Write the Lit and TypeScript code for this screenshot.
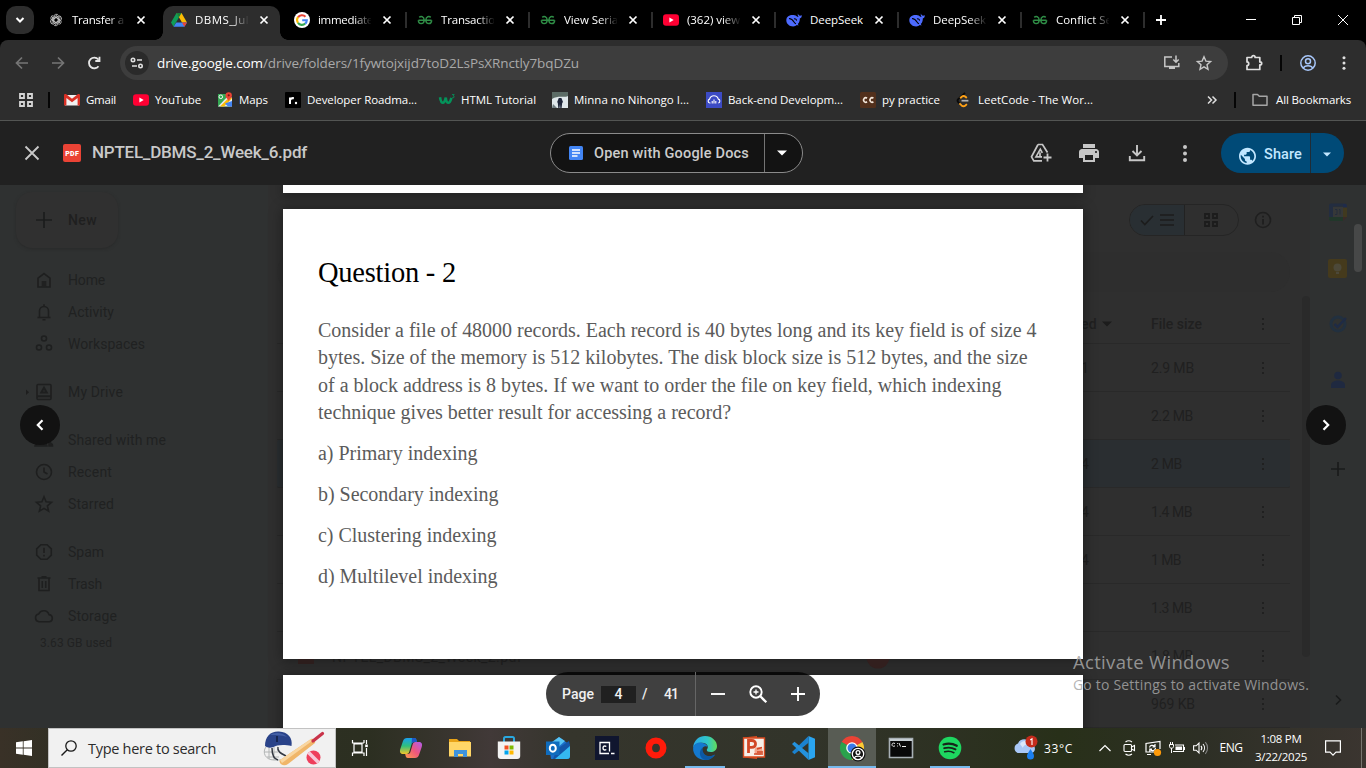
import { LitElement, html, css, svg, nothing } from 'lit';
import { customElement, property } from 'lit/decorators.js';

/** One line of text spread to a given width by letter-spacing. */
@customElement('fit-text')
class FitText extends LitElement {
  @property({ type: Number }) w = 0;
  @property() text = '';
  static styles = css`
    :host { display: inline-block; white-space: pre; flex: none; line-height: 1; }
    span { display: inline-block; white-space: pre; }
  `;
  render() { return html`<span>${this.text}</span>`; }
  updated() {
    const s = this.renderRoot.querySelector('span') as HTMLElement;
    s.style.letterSpacing = '0px';
    const natural = s.getBoundingClientRect().width;
    s.style.letterSpacing = (this.w - natural) / this.text.length + 'px';
  }
}

const t = (text: string, w: number, cls = '') => html`<fit-text class=${cls} .text=${text} .w=${w}></fit-text>`;
const ic = (w: number, h: number, body: unknown, vb = `0 0 ${w} ${h}`) =>
  html`<svg width=${w} height=${h} viewBox=${vb} fill="none" stroke-width="1.6">${body}</svg>`;

/* ---------- favicons ---------- */
const driveLogo = svg`<path d="M5.5 1h5L16 10.5h-5z" fill="#fbbc04"/><path d="M5.5 1 0 10.6l2.5 4.2L8 5.3z" fill="#0f9d58"/><path d="M5.3 10.5H16l-2.6 4.3H2.6z" fill="#4285f4"/><path d="M5.5 1h5L8 5.3z" fill="#188038"/><path d="M16 10.5h-5l2.4 4.3z" fill="#ea4335"/>`;
const fav: Record<string, unknown> = {
  gpt: svg`<g stroke="#c0c0c0" stroke-width=".9" >${[0, 60, 120, 180, 240, 300].map(a => svg`<path transform="rotate(${a} 8 8)" d="M5.800 9.300V4.700a2.500 2.500 0 0 1 4.600-1.300M5.800 6.700 9.300 4.700l3 1.700"/>`)}</g>`,
  drive: driveLogo,
  google: svg`<circle cx="8" cy="8" r="8" fill="#fff"/><g stroke-width="2.1"><path d="M4 5.4A4.8 4.8 0 0 1 11.5 4.7" stroke="#ea4335"/><path d="M4 5.2a4.8 4.8 0 0 0 0 5.6" stroke="#fbbc04"/><path d="M4 10.8a4.8 4.8 0 0 0 7.2.8" stroke="#34a853"/><path d="M11.2 11.6A4.7 4.7 0 0 0 12.8 8.2H8.2" stroke="#4285f4"/></g>`,
  gfg: svg`<g stroke="#2f8d46" stroke-width="1.500"><path d="M1.500 8.200h13M2.300 5.400c1.400-1.400 4.800-1.100 4.800 2.600 0 2.300-1.300 3.600-3 3.600S1.400 10.400 1.400 8.200M13.700 5.400c-1.400-1.400-4.800-1.100-4.800 2.600 0 2.300 1.300 3.600 3 3.600s2.700-1.200 2.700-3.400"/></g>`,
  yt: svg`<rect y="2.300" width="16" height="11.400" rx="3" fill="#ff0033"/><path d="m6.400 5.600 4.300 2.400-4.300 2.400z" fill="#fff"/>`,
  ds: svg`<path d="M15.800 3.300c-.8.300-1.300.5-2 .4-1-.2-1.500-1-1.900-2.100-.3 1.200-.2 2.300.7 3.400-1.600-.1-2.300-1.700-4-1.800C4.500 2.500.4 4 .3 8.200c0 3.400 3 6.200 6.800 6.200 1.800 0 2.700-.7 3.700-1.300l1.800.5-.8-1.500c1.800-1.800 2-3.600 2-5.600 1.300-.4 2-1.400 2-3.200z" fill="#4d6bfe"/><path d="M3 6.500c2.500.2 4 1.800 5.200 3.700.4.700 1 1.200 1.700 1.500M8 7c1.300-.6 2.600.3 2.500 1.600" stroke="#000" stroke-width="1.100"/>`,
  gmail: svg`<path d="M1 3h14v10.500H1z" fill="#f1f1f1"/><path d="M0 3.500C0 2 1.600 1.700 2.600 2.500L8 6.800l5.400-4.300c1-.8 2.600-.5 2.600 1V13.500h-2.400V6L8 10.300 2.400 6v7.500H0z" fill="#d93025"/>`,
  maps: svg`<path d="M1 2h12v12.500H1z" fill="#34a853"/><path d="M1 14.500 12 3l3 3v8.500z" fill="#e8eaed"/><path d="m3 14.500 10-10 2 2-8 8z" fill="#fbbc04"/><path d="M8 11.500 11 14.500h4V9z" fill="#4285f4"/><circle cx="3.800" cy="4.800" r="1.800" stroke="#fff" stroke-width=".9"/><path d="M11.700 9.500C11.500 7 8.500 6 8.500 3.400a3.200 3.200 0 0 1 6.400 0C14.900 6 12 7 11.700 9.500z" fill="#ea4335"/><circle cx="11.700" cy="3.300" r="1.100" fill="#7b1712"/>`,
  road: svg`<rect width="16" height="16" rx="1" fill="#000"/><path d="M5 12V5.500M5 8.200C5.600 6.400 7 5.900 8.900 6.200" stroke="#fff" stroke-width="2"/><circle cx="11" cy="11" r="1.200" fill="#fff"/>`,
  w3: svg`<path d="M1 5.200c.5 3 1.600 5.600 3 5.600S6.200 8 6.800 5.700C7 8 8 10.800 9.400 10.800s2.400-2.800 3-5" stroke="#04925a" stroke-width="2.600"/><path d="M13 2.600h2.200l-1 1.200c1.400.2 1.300 2-.2 2-.5 0-.8-.2-1-.5" stroke="#04925a" stroke-width=".9"/>`,
  minna: svg`<path d="M0 0h16v16H0z" fill="#dfe7ea"/><path d="M0 0h16v4c-4 2-10-1-16 3z" fill="#5c6c66"/><path d="M6.800 6h2.600l1.600 4-.8 1-.6 5H8.300L8 12l-.5 4H6.300l-.5-5-.6-1z" fill="#1d2438"/><path d="M1 12l4 4H0z" fill="#6f7d80"/>`,
  back: svg`<path d="M0 0h16v16H0z" fill="#3c4bc4"/><path d="M4.500 11H3.800a2 2 0 0 1-.2-3.900 4.500 4.500 0 0 1 8.700 0 2 2 0 0 1 0 3.900M6.200 11.500V9M8 11.500V7.500M9.800 11.500V9" stroke="#fff" stroke-width="1.100"/>`,
  cc: svg`<rect width="16" height="16" rx="1.500" fill="#52301c"/><path d="M7 6.200a2.200 2.200 0 1 0 0 3.600M13.400 6.200a2.200 2.200 0 1 0 0 3.600" stroke="#f5e9dd" stroke-width="1.700"/>`,
  leet: svg`<path d="M9 .8 2.200 7.200c-.9 1-.9 2 0 3l1.200 1.200" stroke="#0a0a0a" stroke-width="1.800"/><path d="m4.200 6.200 1.500-1.400c1.200-1 2.600-1 3.800 0l1.300 1.200M3.400 11.400l2.200 2c1.200 1 2.600 1 3.800 0l1.500-1.300" stroke="#ffa116" stroke-width="1.900"/><path d="M5.500 8.700h6.900" stroke="#b3b3b3" stroke-width="1.700"/>`,
};

/* ---------- sidebar glyphs, 20px grid ---------- */
const nav: Record<string, unknown> = {
  Home: svg`<path d="M4 8.200 10 3.500l6 4.700V17H4z"/><path d="M7.700 11h4.600v6H7.700z" fill="currentColor" stroke="none"/>`,
  Activity: svg`<path d="M3.500 15.500h13M5.500 15V9a4.500 4.500 0 0 1 9 0v6M10 2.200v2M8.500 17.800h3"/>`,
  Workspaces: svg`<circle cx="10" cy="4.500" r="2.500"/><circle cx="5" cy="13.500" r="2.500"/><circle cx="15" cy="13.500" r="2.500"/>`,
  'My Drive': svg`<rect x="3" y="2.500" width="14" height="15" rx="1"/><path d="M3 14.300h14M10 5.800 7.300 10.500h5.400z" stroke-width="2"/>`,
  'Shared with me': svg`<path d="M1 16c0-4 12-4 12 0zM15 16h3.500c0-2-1-3-3.500-3.400zM7 5a2.700 2.700 0 1 0 .1 0" fill="currentColor"/>`,
  Recent: svg`<circle cx="10" cy="10" r="7.500"/><path d="M10 5.500V10l3.500 2"/>`,
  Starred: svg`<path d="m10 2.800 2.100 5 5.400.5-4.100 3.600 1.200 5.300L10 14.400l-4.600 2.800 1.200-5.300-4.100-3.600 5.400-.5z"/>`,
  Spam: svg`<path d="M6.900 2.700h6.200l4.200 4.200v6.200l-4.200 4.200H6.900l-4.200-4.200V6.900zM10 5.800v5.200M10 12.700v1.800"/>`,
  Trash: svg`<path d="M3.500 4h13M5 4h10v12.500H5zM8.300 7v7M11.700 7v7M7.500 2.700h5"/>`,
  Storage: svg`<path d="M5 15.700a3.900 3.900 0 0 1-.3-7.700A5.500 5.500 0 0 1 15 8.600a3.600 3.600 0 0 1 .5 7.100z"/>`,
};

const dots = (c = 'currentColor') => svg`<g fill=${c}><circle cx="3" cy="3" r="1.600"/><circle cx="3" cy="8.500" r="1.600"/><circle cx="3" cy="14" r="1.600"/></g>`;
const smallDots = ic(6, 14, svg`<path d="M2 1h2v2H2zM2 6h2v2H2zM2 11h2v2H2z" fill="currentColor"/>`);

const tabs: [string, string, number][] = [
  ['gpt', 'Transfer a', 52], ['drive', 'DBMS_Jul', 54], ['google', 'immediate', 55], ['gfg', 'Transactio', 54],
  ['gfg', 'View Seria', 54], ['yt', '(362) view', 53], ['ds', 'DeepSeek', 53], ['ds', 'DeepSeek', 53], ['gfg', 'Conflict Se', 56],
];
const marks: [string, string, number, number][] = [
  ['gmail', 'Gmail', 30, 69], ['yt', 'YouTube', 46, 84], ['maps', 'Maps', 29, 68], ['road', 'Developer Roadma...', 110, 154],
  ['w3', 'HTML Tutorial', 75, 113], ['minna', 'Minna no Nihongo I...', 115, 154], ['back', 'Back-end Developm...', 115, 154],
  ['cc', 'py practice', 58, 96], ['leet', 'LeetCode - The Wor...', 115, 154],
];
const sideItems: [string, number, string][] = [
  ['Home', 37, ''], ['Activity', 46, ''], ['Workspaces', 77, ''], ['My Drive', 55, 'gap'], ['Shared with me', 98, 'gap'],
  ['Recent', 44, ''], ['Starred', 46, ''], ['Spam', 36, 'gap'], ['Trash', 34, ''], ['Storage', 49, ''],
];
const rows: [string, number, string][] = [
  ['2.9 MB', 43, '1'], ['2.2 MB', 42, ''], ['2 MB', 31, '4'], ['1.4 MB', 41, '4'], ['1 MB', 30, '4'], ['1.3 MB', 41, ''], ['1.8 MB', 42, ''], ['969 KB', 44, ''],
];

/* ---------- taskbar glyphs ---------- */
const apps: [unknown, string][] = [
  [ic(24, 24, svg`<defs><linearGradient id="c1" x1="0" y1="0" x2="0" y2="1"><stop offset="0" stop-color="#1aa0f0"/><stop offset=".5" stop-color="#2fc07c"/><stop offset="1" stop-color="#f4c52a"/></linearGradient><linearGradient id="c2" x1="1" y1="0" x2="0" y2="1"><stop offset="0" stop-color="#b05cf0"/><stop offset=".5" stop-color="#f0567c"/><stop offset="1" stop-color="#ff9a4c"/></linearGradient></defs><path d="M8 2h7c2 0 2.300 1.500 2.800 4h-2.500c-2 0-2.500 1-3 3L10.500 15c-.5 2-1.200 3-3 3H4C1 18 .5 15.500 1.300 13L4 5c.7-2 2-3 4-3z" fill="url(#c1)"/><path d="M16 22H9c-2 0-2.300-1.500-2.800-4h2.500c2 0 2.500-1 3-3L13.500 9c.5-2 1.200-3 3-3H20c3 0 3.500 2.500 2.700 5L20 19c-.7 2-2 3-4 3z" fill="url(#c2)"/><path d="M13 2h3c1.500.2 1.500 2 2 4h-2.500c-2 0-2.500 1-3 2.500z" fill="#1d58c8"/>`), ''],
  [ic(24, 24, svg`<path d="M1 3h8l2 2h11v15H1z" fill="#e8a317"/><path d="M1 6h22v14.500H1z" fill="#ffd667"/><path d="M6 21v-7h13v7h-4v-3h-5v3z" fill="#3f93dc"/>`), ''],
  [ic(24, 24, svg`<path d="M7 6V2.500C7 1.500 7.500 1 8.500 1h7c1 0 1.500.5 1.500 1.500V6" stroke="#2aa7df" stroke-width="2"/><path d="M.8 5.500h22.400V20a3 3 0 0 1-3 3H3.800a3 3 0 0 1-3-3z" fill="#f3f3f3"/><path d="M7.500 9.500h4v4h-4z" fill="#f25022"/><path d="M12.500 9.500h4v4h-4z" fill="#7fba00"/><path d="M7.500 14.500h4v4h-4z" fill="#00a4ef"/><path d="M12.500 14.500h4v4h-4z" fill="#ffb900"/>`), ''],
  [ic(26, 24, svg`<path d="M4 9 14 1l11 8v11a3 3 0 0 1-3 3H6z" fill="#1b6fc9"/><path d="M7 6 14 1l6 4-9 8z" fill="#56c4f5"/><path d="m12 13 12-8 1 4v11a3 3 0 0 1-3 3H8z" fill="#1356a8"/><path d="m25 10-15 13h12a3 3 0 0 0 3-3z" fill="#35b8f1"/><path d="M1 5.500h13.500V19H1z" fill="#0f6cbd"/><ellipse cx="7.800" cy="12.200" rx="3" ry="3.500" stroke="#fff" stroke-width="2"/>`), ''],
  [ic(24, 24, svg`<path d="M0 0h24v24H0z" fill="#10162f"/><path d="M14 17.500H5v-11h9.500v9" stroke="#fff" stroke-width="1.300"/><path d="M11.300 10.500C9.500 9.300 8 10.300 8 12s1.500 2.700 3.300 1.500M16 17.500h3.500" stroke="#fff" stroke-width="1.400"/>`), ''],
  [ic(22, 22, svg`<circle cx="11" cy="11" r="7" stroke="#ff1b0a" stroke-width="7"/><ellipse cx="11" cy="11" rx="3.800" ry="4.300" fill="#34352c"/>`), ''],
  [ic(24, 24, svg`<defs><linearGradient id="e1" x1="0" y1="0" x2="1" y2="0"><stop offset="0" stop-color="#2aa9e8"/><stop offset=".6" stop-color="#30c7c7"/><stop offset="1" stop-color="#62dd5a"/></linearGradient></defs><path d="M.3 10C1.500 4 6 0 12 0c7 0 12 5 12 10 0 4-3 6-6.200 6-3 0-4-1-4-2s1.200-1.500 1-3.500C14.500 8 11.500 6.500 8 6.800 4 7 1 9 .3 12z" fill="url(#e1)"/><path d="M.1 12C1 8 5 6.200 8.500 6.700c3 .3 5.700 2 6 4C13 9.500 9 10 9 14c0 4 4 7 8.500 6.300 2-.3 3.500-1.300 4.500-1.800C20 22 16 24 12 24 5 24-.3 18.500.1 12z" fill="#1479cf"/><path d="M9.500 11.500C4 17 8 24 13 24c4 0 7-2 9-5.500-6 3.500-13 1.500-12.500-7z" fill="#0c59a4"/>`), 'open'],
  [ic(24, 24, svg`<path d="M1 1.500 15 0v23L1 21.500z" fill="#d6491f"/><path d="M1.500 2h21v19h-21z" fill="#f7efe9" stroke="#d6491f" stroke-width="1.400"/><path d="M6.500 17V4.500h3.200c5.200 0 5 6.800 0 6.800H6.800" stroke="#d24726" stroke-width="2.800"/><circle cx="16.500" cy="15" r="4" fill="#f2a38a"/><path d="M12 18h9M15 13l5-1.500M15 16h6" stroke="#d24726"/>`), ''],
  [ic(24, 24, svg`<path d="M17.500 0 24 2.800v18.400L17.500 24z" fill="#2aa5f0"/><path d="M17.500 0v6.800L3.500 18.200 1 16z" fill="#1b82cf"/><path d="m1 8 2.500-2.200 14 11.400V24z" fill="#2492de"/>`), ''],
  [ic(24, 24, svg`<path d="M12 12 1.600 6a12 12 0 0 1 20.800 0z" fill="#ea4335"/><path d="M12 12 1.600 6A12 12 0 0 0 12 24z" fill="#2aa24c"/><path d="M12 12 22.400 6A12 12 0 0 1 12 24z" fill="#fcc934"/><circle cx="12" cy="12" r="5.800" fill="#fff"/><circle cx="12" cy="12" r="4.500" fill="#3b78e7"/><circle cx="18" cy="18" r="7.500" fill="#111"/><circle cx="18" cy="18" r="5.700" stroke="#fff" stroke-width="1.300"/><circle cx="18" cy="16.500" r="1.900" stroke="#fff" stroke-width="1.300"/><path d="M14.200 21.800c1.500-2.300 6.100-2.300 7.600 0" stroke="#fff" stroke-width="1.300"/>`), 'open active'],
  [ic(24, 20, svg`<path d="M.5.5h23v19H.5z" fill="#080808" stroke="#a8b0b5"/><path d="M1 1h22v2H1z" fill="#c5cdd2"/><path d="M6 5.500c-2-1-3 0-3 1.200s1 2.200 3 1.200M8 5.500h.8M8 8h.8M10 5l1.500 3.500M13 8.500h4" stroke="#eee" stroke-width="1"/>`), ''],
  [ic(24, 24, svg`<circle cx="12" cy="12" r="11.300" fill="#1ed760"/><g stroke="#16241a" stroke-linecap="round"><path d="M5.500 8.500c4.500-1.300 9.500-.8 13.300 1.300" stroke-width="2.200"/><path d="M6.200 12.200c4-1.100 8-.6 11.300 1.200" stroke-width="1.900"/><path d="M6.700 15.700c3.300-.9 6.500-.5 9.200 1" stroke-width="1.600"/></g>`), 'open'],
];

@customElement('app-root')
class AppRoot extends LitElement {
  static styles = css`
    :host { display: flex; flex-direction: column; width: 1366px; height: 768px; overflow: hidden; background: #000;
      font-family: "Open Sans", "Noto Sans", sans-serif; font-size: 12px; color: #fff; }
    * { box-sizing: border-box; }
    svg { display: block; flex: none; overflow: visible; }
    .row, .tabs, .tab, .toolbar, .omni, .marks, .mark, .taskbar, .head { display: flex; align-items: center; }
    .grow { flex: 1; }
    .cell { display: grid; place-items: center; flex: none; }

    .tabs { height: 40px; padding-left: 6px; }
    .find { width: 28px; height: 28px; border-radius: 10px; background: #2d2d2d; margin-right: 6px; }
    .tab { width: 123px; height: 40px; padding-left: 8px; position: relative; flex: none; }
    .title { width: 53px; margin-left: 8px; overflow: hidden; height: 18px; line-height: 18px; font-size: 11.5px; mask-image: linear-gradient(90deg, #000 68%, transparent 102%); }
    .title.full { mask-image: none; }
    .title fit-text { margin-top: 3px; vertical-align: top; }
    .close { width: 32px; }
    .sep { width: 2px; height: 16px; background: #2d2d2d; margin-left: 2px; }
    .tab.on::before { content: ""; position: absolute; z-index: 0; inset: 6px 6px 0 0; background: #2d2d2d; border-radius: 10px 10px 0 0; }
    .tab.on::after { content: ""; position: absolute; left: -8px; right: -2px; bottom: 0; height: 8px;
      background: radial-gradient(circle at 0 0, transparent 7.500px, #2d2d2d 8px) 0 0 / 8px 8px no-repeat,
        radial-gradient(circle at 100% 0, transparent 7.500px, #2d2d2d 8px) 100% 0 / 8px 8px no-repeat; }
    .tab > * { z-index: 1; }
    .win { width: 46px; height: 40px; }
    .plus { width: 28px; }

    .toolbar { height: 46px; background: #2d2d2d; border-radius: 8px 8px 0 0; padding-left: 4px; flex: none; }
    .tb { width: 36px; }
    .omni { width: 1108px; height: 34px; background: #3d3d3d; border-radius: 17px; margin-left: 8px; padding-left: 5px; }
    .site { width: 24px; height: 24px; border-radius: 50%; background: #2a2a2a; margin-right: 8px; }
    .url { font-size: 13.500px; margin-top: 2px; }
    .dim { color: #a9a9a9; }
    .vs { width: 2px; height: 16px; background: #050505; flex: none; }
    .marks { height: 35px; background: #2d2d2d; padding: 0 0 8px 19px; flex: none; }
    .mark { gap: 6px; flex: none; }
    .mark fit-text { font-size: 11.500px; }
    .marks .vs:first-of-type { margin: 0 14px 0 15px; }
    .hair { height: 1px; margin-top: -1px; background: #535553; flex: none; }

    .viewer { height: 607px; display: flex; flex-direction: column; font-family: Roboto, sans-serif; flex: none; position: relative; }
    .head { height: 64px; background: #212121; color: #ccc; flex: none; padding: 0 22px 0 24px; z-index: 2; }
    .fname { font-size: 17px; font-weight: 500; margin: -2px 0 0 11px; color: #c9c9c9; }
    .open { width: 253px; height: 40px; border: 1px solid #8b8b8b; border-radius: 20px; background: #131313; display: flex; align-items: center; padding-left: 18px; margin-left: 243px; }
    .open fit-text { font-size: 14.500px; font-weight: 500; margin: 2px 15px 0 11px; }
    .odiv { width: 1px; height: 38px; background: #747474; }
    .share { width: 123px; height: 40px; border-radius: 20px; background: #004a77; color: #c2e7ff; display: flex; align-items: center; padding-left: 18px; }
    .share svg { margin-top: 5px; }
    .share .cell svg { margin-top: 2px; }
    .share fit-text { font-size: 14.500px; font-weight: 500; margin: 5px 0 0 8px; }
    .sdiv { width: 1px; height: 40px; background: #202c36; margin-left: 8px; }

    .body { flex: 1; display: grid; grid-template-columns: 268px 1fr 56px; background: #2f3131; color: #1f1f1f; position: relative; overflow: hidden; min-height: 0; }
    .side { padding-top: 7px; stroke: #1e1f1f; }
    .new { width: 102px; height: 56px; margin-left: 16px; border-radius: 16px; background: #303030; box-shadow: 0 1px 3px #292a2a; display: flex; align-items: center; padding-left: 19px; gap: 15px; font-size: 14px; font-weight: 500; margin-bottom: 16px; }
    .item { height: 32px; padding-left: 34px; display: flex; align-items: center; gap: 14px; font-size: 14px; color: #202121; position: relative; }
    .item.gap { margin-top: 16px; }
    .used { margin: 5px 0 0 40px; font-size: 12px; height: 12px; display: block; color: #212222; }
    .caret { position: absolute; left: 26px; top: 12px; }

    .main { background: #2f2f2f; padding: 19px 19px 0 9px; position: relative; color: #202020; overflow: hidden; }
    .ctl { justify-content: flex-end; height: 32px; padding-right: 18px; }
    .toggle { width: 110px; height: 32px; border: 1px solid #252525; border-radius: 16px; display: flex; overflow: hidden; margin-right: 14px; }
    .toggle > div { flex: 1; display: flex; align-items: center; justify-content: center; gap: 6px; }
    .toggle .sel { background: #292f33; border-right: 1px solid #222; }
    .filter { height: 40px; margin: 16px 1px 12px 0; border-radius: 20px; background: #2e2e2e; }
    .line { height: 48px; border-bottom: 1px solid #292929; display: grid; grid-template-columns: 804px 70px 99px 26px; align-items: center; font-size: 14px; margin-right: 1px; }
    .main .hd { height: 40px; font-weight: 500; }
    .main .pick { background: #2a2e31; border-radius: 2px; }
    .main .line > .lead { display: flex; align-items: center; }
    .gutter { position: absolute; right: 0px; top: 111px; width: 8px; height: 361px; border-radius: 4px; background: #2a2a2a; }
    .rail { display: flex; flex-direction: column; align-items: center; padding: 15px 1px 0 0; position: relative; }
    .rail .cell { width: 24px; height: 24px; margin-bottom: 32px; }
    .thumb { position: absolute; left: 44px; top: 39px; width: 8px; height: 48px; border-radius: 4px; background: #474848; }

    .pages { position: absolute; inset: 0 283px 0 283px; display: flex; flex-direction: column; gap: 16px; background: #2f2f2f; }
    .page { background: #fff; box-shadow: 0 1px 12px 1px rgba(0,0,0,.36); flex: none; font-family: "Liberation Serif", serif; color: #5b5b5b; }
    .p0 { height: 8px; } .p2 { height: 60px; }
    .p1 { height: 450px; padding: 50px 0 0 35px; display: flex; flex-direction: column; font-size: 20px; }
    .p1 .q { font-size: 28.500px; color: #000; margin-bottom: 32px; height: 29px; }
    .p1 .l { height: 27.330px; } .p1 .l4 { height: 41px; }
    .ghost { position: absolute; inset: 474px 283px 0 283px; height: 10px; overflow: hidden; color: #1b1b1b; display: flex; gap: 18px; padding-left: 15px; font-size: 14px; }
    .ghost .up { margin-top: -10px; }
    .round { position: absolute; top: 220px; width: 40px; height: 40px; border-radius: 50%; background: #121212; z-index: 3; }
    .prev { left: 20px; } .next { right: 20px; }
    .pill { position: absolute; left: 546px; top: 487px; width: 274px; height: 44px; border-radius: 22px; background: rgba(0,0,0,.75); color: #f0f0f0; display: flex; align-items: center; padding-left: 16px; font-size: 14px; font-weight: 500; }
    .num { width: 35px; height: 17px; background: #202020; margin: 0 6px 0 7px; }
    .pdiv { width: 1px; height: 44px; background: #666; margin-left: 17px; }
    .mark-win { position: absolute; left: 1073px; top: 468px; font-family: "Open Sans", sans-serif; color: rgba(166,166,166,.85); display: flex; flex-direction: column; gap: 6px; z-index: 4; font-size: 18.500px; }
    .mark-win .s { font-size: 14px; }

    .taskbar { height: 40px; flex: none; background: linear-gradient(90deg, #393127 0, #2f3024 80px, #2c2f21 370px, #37342d 440px, #413938 490px, #35352c 570px, #32342a 800px, #2d3122 950px, #283019 1060px, #2d2f25 1200px, #3b3530 1366px); position: relative; }
    .start { width: 48px; }
    .search { width: 288px; height: 40px; background: #f1f1f1; border: 1px solid #c2c2c2; color: #2c2c2c; display: flex; align-items: center; padding-left: 12px; font-size: 14.500px; }
    .search fit-text { margin: 2px 47px 0 11px; }
    .app { width: 49px; height: 40px; padding-right: 1px; position: relative; }
    .app.active { background: linear-gradient(#585c54, #585c54) 0 0 / 48px 40px no-repeat; }
    .app.open-app::after { content: ""; position: absolute; left: 4px; right: 5px; bottom: 0; height: 2px; background: #76b9ed; }
    .app.active.open-app::after { left: 0; right: 1px; }
    .tv { width: 48px; margin-right: 3px; }
    .tray { width: 24px; }
    .clock { display: flex; flex-direction: column; align-items: center; gap: 7px; font-size: 11.500px; width: 64px; padding-bottom: 1px; }
    .edge { width: 1px; height: 40px; background: #77756f; position: absolute; right: 4px; }
  `;

  private chrome() {
    return html`
      <div class="tabs">
        <div class="find cell">${ic(10, 8, svg`<path d="m1.500 2 3.500 3.500L8.500 2" stroke="#fff" stroke-width="2"/>`)}</div>
        ${tabs.map(([icon, name, w], i) => html`<div class="tab ${i === 1 ? 'on' : ''}">
          ${ic(16, 16, fav[icon])}
          <div class="title ${i === 6 ? 'full' : ''}">${t(name, w)}</div>
          <div class="close cell">${ic(10, 10, svg`<path d="m1.500 1.500 7 7m0-7-7 7" stroke="#fff" stroke-width="1.700"/>`)}</div>
          ${i > 1 ? html`<div class="sep"></div>` : nothing}
        </div>`)}
        <div class="plus cell">${ic(12, 12, svg`<path d="M6 1v10M1 6h10" stroke="#fff" stroke-width="1.800"/>`)}</div>
        <div class="grow"></div>
        <div class="win cell">${ic(10, 10, svg`<path d="M0 4.500h10" stroke="#fff" stroke-width="1"/>`)}</div>
        <div class="win cell">${ic(10, 10, svg`<path d="M.5 2.500h7v7h-7zM2.500 2V.5h7v7H8" stroke="#fff" stroke-width="1"/>`)}</div>
        <div class="win cell">${ic(10, 10, svg`<path d="m0 0 10 10M10 0 0 10" stroke="#fff" stroke-width="1"/>`)}</div>
      </div>
      <div class="toolbar">
        <div class="tb cell">${ic(14, 14, svg`<path d="M13 7H2M7 1.500 1.500 7 7 12.500" stroke="#757575" stroke-width="1.700"/>`)}</div>
        <div class="tb cell">${ic(14, 14, svg`<path d="M1 7h11M7 1.500 12.500 7 7 12.500" stroke="#757575" stroke-width="1.700"/>`)}</div>
        <div class="tb cell">${ic(14, 14, svg`<path d="M11.500 10.200A5.300 5.300 0 1 1 11.300 3.500M12.500.8V5H8.300" stroke="#e6e6e6" stroke-width="1.800"/>`)}</div>
        <div class="omni">
          <div class="site cell">${ic(14, 12, svg`<g stroke="#e0e0e0" stroke-width="1.600"><circle cx="3" cy="3" r="1.700"/><path d="M7 3h5M2 9h5"/><circle cx="10.500" cy="9" r="1.700"/></g>`)}</div>
          ${t('drive.google.com', 106, 'url')}${t('/drive/folders/1fywtojxijd7toD2LsPsXRnctly7bqDZu', 316, 'url dim')}
          <div class="grow"></div>
          ${ic(18, 16, svg`<path d="M9 2H1.800v9.500h14V8M13 .5V7M10.300 4.500 13 7.200l2.700-2.700" stroke="#c7c7c7" stroke-width="1.500"/><path d="M6 11.500h6V14H6z" fill="#c7c7c7"/>`)}
          <div class="cell" style="width:46px;margin-right:1px">${ic(16, 16, svg`<path d="m8 1.800 1.900 4.300 4.700.5L11 9.700l1 4.600-4-2.400-4 2.400 1-4.600-3.600-3.100 4.700-.5z" stroke="#c7c7c7" stroke-width="1.400"/>`)}</div>
        </div>
        <div class="cell" style="width:52px">${ic(18, 18, svg`<path d="M2 3.500h4.700c0-2.600 3.400-2.600 3.400 0h4.700v4.400c2.500 0 2.500 3 0 3V15.500H2v-4c2.300 0 2.300-3.600 0-3.600z" stroke="#e0e0e0" stroke-width="1.700" stroke-linejoin="round"/>`)}</div>
        <div class="vs"></div>
        <div class="cell" style="width:52px">${ic(16, 16, svg`<g stroke="#a8c7fa" stroke-width="1.500"><circle cx="8" cy="8" r="7.200"/><circle cx="8" cy="6.300" r="2.500"/><path d="M3.200 13.200c1.500-3.300 8.100-3.300 9.600 0"/></g>`)}</div>
        <div class="cell" style="width:20px">${ic(6, 16, dots('#e0e0e0'), '0 0 6 17')}</div>
      </div>
      <div class="marks">
        ${ic(14, 14, svg`<path d="M1 1h4v4H1zM9 1h4v4H9zM1 9h4v4H1zM9 9h4v4H9z" stroke="#d5d5d5" stroke-width="1.800"/>`)}
        <div class="vs"></div>
        ${marks.map(([icon, name, w, box]) => html`<div class="mark" style="width:${box}px">${ic(16, 16, fav[icon])}${t(name, w)}</div>`)}
        <div class="grow"></div>
        ${ic(12, 10, svg`<path d="m2 1.500 3.500 3.500L2 8.500M6.500 1.500 10 5 6.500 8.500" stroke="#dedede" stroke-width="1.500"/>`)}
        <div class="vs" style="margin:0 16px"></div>
        <div class="mark" style="width:114px;gap:8px">${ic(16, 14, svg`<path d="M1 12.300V1.500h4.500L7.300 3.300H15v9z" stroke="#a5a5a5" stroke-width="1.500" stroke-linejoin="round"/>`)}${t('All Bookmarks', 75)}</div>
      </div>
      <div class="hair"></div>`;
  }

  private drive() {
    return html`
      <div class="side">
        <div class="new">${ic(18, 18, svg`<path d="M9 1v16M1 9h16" stroke="#1b1c1c"/>`)}${t('New', 29)}</div>
        ${sideItems.map(([name, w, gap]) => html`<div class="item ${gap}">
          ${name === 'My Drive' ? html`<div class="caret">${ic(4, 8, svg`<path d="m0 1.500 3 2.700-3 2.700z" fill="#1e1e1e" stroke="none"/>`)}</div>` : nothing}
          ${ic(20, 20, nav[name])}${t(name, w)}</div>`)}
        ${t('3.63 GB used', 72, 'used')}
      </div>
      <div class="main">
        <div class="row ctl">
          <div class="toggle"><div class="sel">${ic(14, 12, svg`<path d="m1 6.500 3.800 4L13 2" stroke="#1c1c1c"/>`)}${ic(14, 14, svg`<path d="M0 2h14M0 7h14M0 12h14" stroke="#1c1c1c"/>`)}</div>
            <div>${ic(14, 14, svg`<path d="M1 1h4v4H1zM9 1h4v4H9zM1 9h4v4H1zM9 9h4v4H9z" stroke="#1c1c1c" stroke-width="1.800"/>`)}</div></div>
          ${ic(20, 20, svg`<circle cx="10" cy="10" r="7.500" stroke="#1f1f1f"/><path d="M10 9v5.500M10 5.800v1.600" stroke="#1f1f1f" stroke-width="1.800"/>`)}
        </div>
        <div class="filter"></div>
        <div class="line hd"><span></span><span class="lead">${t('ed', 16)}<span class="cell" style="width:20px">${ic(10, 6, svg`<path d="M0 .5h10l-5 5z" fill="#1c1c1c"/>`)}</span></span>${t('File size', 51)}<span class="cell">${smallDots}</span></div>
        ${rows.map(([size, w, y], i) => html`<div class="line ${i === 2 ? 'pick' : ''}"><span></span><span class="lead">${y}</span>${t(size, w)}<span class="cell">${smallDots}</span></div>`)}
        <div class="gutter"></div>
      </div>
      <div class="rail">
        <div class="cell">${ic(18, 18, svg`<path d="M0 2.500A2 2 0 0 1 2 .5h12v3H4v12H0z" fill="#232d40"/><path d="M14 .5h2a2 2 0 0 1 2 2V14h-4z" fill="#40391f"/><path d="M14 .5h2a2 2 0 0 1 2 2v2h-4z" fill="#1f2b4a"/><path d="M0 14h14v4H2a2 2 0 0 1-2-2z" fill="#21372a"/><path d="M14 14h4l-4 4z" fill="#3c2a27"/><path d="M4 4h10v10H4z" fill="#363838"/><path d="M6 6.500h2v5H6M10 6.500h1v5" stroke="#252c3b" stroke-width="1"/>`)}</div>
        <div class="cell">${ic(19, 19, svg`<rect width="19" height="19" rx="2" fill="#453a1c"/><circle cx="9.500" cy="8.500" r="4" fill="#4c4839"/><path d="M8 13h3v2H8z" fill="#4c4839"/>`)}</div>
        <div class="cell">${ic(18, 18, svg`<circle cx="9" cy="9" r="7" stroke="#22303f" stroke-width="3"/><path d="m5.500 9 3 3L17 3" stroke="#1f2b45" stroke-width="2.500"/>`)}</div>
        <div class="cell">${ic(16, 18, svg`<circle cx="8" cy="4.500" r="3.800" fill="#1f2940"/><path d="M1 17v-3c0-6 14-6 14 0v3z" fill="#1f2940"/>`)}</div>
        <div class="cell" style="margin-top:33px">${ic(14, 14, svg`<path d="M7 0v14M0 7h14" stroke="#1a1b1b"/>`)}</div>
        <div class="cell" style="margin-top:175px">${ic(8, 12, svg`<path d="m2 1.500 4.500 4.500L2 10.500" stroke="#1a1b1b"/>`)}</div>
        <div class="thumb"></div>
      </div>`;
  }

  private reader() {
    const lines: [string, number][] = [
      ['Consider a file of 48000 records. Each record is 40 bytes long and its key field is of size 4', 718.5],
      ['bytes. Size of the memory is 512 kilobytes. The disk block size is 512 bytes, and the size', 709.5],
      ['of a block address is 8 bytes. If we want to order the file on key field, which indexing', 683.5],
      ['technique gives better result for accessing a record?', 413]];
    const opts: [string, number][] = [['a) Primary indexing', 159.5], ['b) Secondary indexing', 180.5], ['c) Clustering indexing', 178.5], ['d) Multilevel indexing', 179.5]];
    return html`
      <div class="pages">
        <div class="page p0"></div>
        <div class="page p1">
          ${t('Question - 2', 138, 'q')}
          ${lines.map(([s, w], i) => t(s, w, i === 3 ? 'l4' : 'l'))}
          ${opts.map(([s, w]) => t(s, w, 'l4'))}
        </div>
        <div class="page p2"></div>
      </div>
      <div class="ghost">
        ${ic(16, 16, svg`<path d="M0-10h16V5H0z" fill="#2c1d1c"/>`)}
        <span class="up">${t('NPTEL_DBMS_2_Week_2.pdf', 190)}</span>
        <span style="width:306px"></span>
        ${ic(24, 16, svg`<circle cx="14" cy="-2" r="11.500" fill="#321f1e"/>`)}
      </div>
      <div class="round prev cell">${ic(8, 12, svg`<path d="M6.500 1.200 1.800 6l4.700 4.800" stroke="#fff" stroke-width="2.200"/>`)}</div>
      <div class="round next cell">${ic(8, 12, svg`<path d="M1.500 1.200 6.200 6l-4.700 4.800" stroke="#fff" stroke-width="2.200"/>`)}</div>
      <div class="pill">
        ${t('Page', 32)}<div class="num cell">${t('4', 8)}</div>${t('/', 5)}<span style="width:17px"></span>${t('41', 14)}
        <div class="pdiv"></div>
        <div class="cell" style="width:44px">${ic(14, 14, svg`<path d="M0 7h14" stroke="#fff" stroke-width="1.900"/>`)}</div>
        <div class="cell" style="width:36px">${ic(18, 18, svg`<circle cx="7" cy="7" r="5.700" stroke="#fff" stroke-width="1.900"/><path d="m11.300 11.300 6 6" stroke="#fff" stroke-width="2.300"/><path d="M7 4.500v5M4.500 7h5" stroke="#fff" stroke-width="1.300"/>`)}</div>
        <div class="cell" style="width:44px">${ic(14, 14, svg`<path d="M0 7h14M7 0v14" stroke="#fff" stroke-width="1.900"/>`)}</div>
      </div>
      <div class="mark-win">${t('Activate Windows', 157)}${t('Go to Settings to activate Windows.', 236, 's')}</div>`;
  }

  private taskbar() {
    return html`<div class="taskbar">
      <div class="start cell">${ic(16, 16, svg`<path d="M0 2.300 6.800 1.300v6.300H0zM7.600 1.200 16 0v7.600H7.600zM0 8.400h6.800v6.300L0 13.700zM7.600 8.400H16V16l-8.400-1.200z" fill="#fff"/>`)}</div>
      <div class="search">
        ${ic(16, 16, svg`<circle cx="10" cy="6" r="5.200" stroke="#1a1a1a" stroke-width="1.300"/><path d="M6.300 9.700.5 15.500" stroke="#1a1a1a" stroke-width="1.400"/>`)}
        ${t('Type here to search', 128)}
        ${ic(62, 36, svg`<g stroke="#b2b5b5" stroke-width="1"><path d="M3 17c-4 5-1 13 8 13h7M1 22h14M4 27h12M6 17v12M11 17v13"/></g><path d="M9 18c0 6 2 11 6 12M15 17c-1 4 2 6 8 9" stroke="#333842" stroke-width="1.500"/><path d="M2 16C2 6 8 1 16 1.500 25 2 30 8 28.500 16c-8-2-15-1-18 1-3 1-6 1-8.500-1z" fill="#2a4389"/><path d="M7 5c4-3 13-3 17 2-6-2-13-2-17-2z" fill="#4460a6"/><path d="M14 6v6" stroke="#162550" stroke-width="2"/><path d="M17 30 48 9c2-1 5 1 4 4L25 34c-4 3-10 0-8-4z" fill="#f0b669"/><path d="M17 30 48 9l1 2-30 22z" fill="#f9d6a0"/><path d="m50 11 9.500-7.500" stroke="#c93349" stroke-width="3.200" stroke-linecap="round"/><circle cx="50.500" cy="27.500" r="7" fill="#ee3f5c"/><path d="m45.500 22.500 10 10" stroke="#f7c8d8" stroke-width="3.500"/>`)}
      </div>
      <div class="tv cell">${ic(18, 16, svg`<g stroke="#fff" stroke-width="1.200"><path d="M3 4h8v8H3zM1.500 0v3H13M13 0v3M1.500 16v-3H13v3M15.500 0v4M15.500 8v8"/></g><path d="M14.200 4.500h2.600v2.600h-2.600z" fill="#fff"/>`)}</div>
      ${apps.map(([icon, state]) => html`<div class="app cell ${state.includes('open') ? 'open-app' : ''} ${state.includes('active') ? 'active' : ''}">${icon}</div>`)}
      <div class="cell" style="width:36px;margin-left:33px">${ic(26, 26, svg`<path d="M5 18a5 5 0 0 1 0-9.500C7 3 15 3 16.500 8c5-1 8 8 2.500 10z" fill="#a9c8f7"/><path d="M7 9c2-4 8-4 9 0-3 0-6 2-6 4z" fill="#dbe8fc"/><path d="M17.500 14c-2 3.500-3.500 5-3.500 7a3.500 3.500 0 0 0 7 0c0-2-1.500-3.500-3.500-7z" fill="#1a7ff0"/><circle cx="18.500" cy="6.500" r="6" fill="#c42b1c"/><path d="M17.200 5 19 3.800V10" stroke="#fff" stroke-width="1.100"/>`)}</div>
      <div style="width:36px">${t('33°C', 29)}</div>
      <div class="grow"></div>
      <div class="tray cell">${ic(12, 8, svg`<path d="m.5 7 5.500-5.500L11.500 7" stroke="#fff" stroke-width="1.200"/>`)}</div>
      <div class="tray cell">${ic(12, 16, svg`<g stroke="#fff" stroke-width="1.100"><rect x="1" y="4.500" width="7.500" height="7" rx="1"/><path d="m8.500 7 3-1.500v5L8.500 9M2.500 2c2-1.500 4.500-1.500 6.500 0M2.500 14c2 1.500 4.500 1.500 6.500 0"/></g>`)}</div>
      <div class="tray cell">${ic(18, 16, svg`<g stroke="#fff" stroke-width="1.200"><path d="M10 12H2V3.500L16 1.500V9M3 14.500h4M5.500 7.500C6 5 9 4.800 10.500 6.500M11 4v3H8.500M11.500 8c0 2.500-3.500 3.500-5 1.700M5.800 11.500V9.200H8"/></g><circle cx="13.500" cy="12.500" r="3.600" fill="#ff9b0a"/>`)}</div>
      <div class="tray cell">${ic(16, 12, svg`<path d="M6 3h8.500v6.500H4" stroke="#fff" stroke-width="1.100"/><path d="M6.500 4.500H13V8H6.500zM15 5h1v3h-1z" fill="#fff"/><path d="M.500 2.500h4v2.200c0 2-4 2-4 0zM1.500 2.500V0M3.500 2.500V0M2.500 6v5" stroke="#fff" stroke-width="1"/>`)}</div>
      <div class="tray cell">${ic(16, 14, svg`<path d="M.6 4.800h2.600L6 2v10L3.200 9.200H.6z" stroke="#fff" stroke-width="1.100"/><path d="M8 4.800c1 1.300 1 3 0 4.300M10 3c2 2.300 2 5.700 0 8" stroke="#fff" stroke-width="1.100"/><path d="M12.300 1.200c3 3.400 3 8.200 0 11.600" stroke="#888" stroke-width="1.100"/>`)}</div>
      <div class="cell" style="width:36px">${t('ENG', 23)}</div>
      <div class="clock">${t('1:08 PM', 41)}${t('3/22/2025', 52)}</div>
      <div class="cell" style="width:40px;margin-right:13px">${ic(16, 16, svg`<path d="M.6.800h14.800v11.400H11L8 15.200l-3-3H.6z" stroke="#fff" stroke-width="1.200"/>`)}</div>
      <div class="edge"></div>
    </div>`;
  }

  render() {
    return html`
      ${this.chrome()}
      <div class="viewer">
        <div class="head">
          ${ic(16, 16, svg`<path d="m1.500 1.500 13 13m0-13-13 13" stroke="#c9c9c9" stroke-width="1.800"/>`)}
          <div style="width:23px"></div>
          ${ic(18, 18, svg`<rect width="18" height="18" rx="2" fill="#ea4335"/><text x="2.200" y="11.800" font-size="7" font-weight="900" font-family="Roboto" fill="#fff" textLength="13.600">PDF</text>`)}
          ${t('NPTEL_DBMS_2_Week_6.pdf', 215, 'fname')}
          <div class="open">
            ${ic(14, 14, svg`<rect width="14" height="14" rx="1.500" fill="#4285f4"/><path d="M3 4h8M3 7h8M3 10h5.500" stroke="#fff" stroke-width="1.400"/>`)}
            ${t('Open with Google Docs', 155)}
            <div class="odiv"></div>
            <div class="cell" style="width:34px">${ic(10, 6, svg`<path d="M0 .5h10l-5 5z" fill="#fff"/>`)}</div>
          </div>
          <div class="grow"></div>
          <div class="cell" style="width:48px">${ic(22, 20, svg`<path d="M8 1.500h4.500l5 8M12 17.800H3.800L1.500 13.800 8 1.500M12 13.800H6l4.300-7.600 2 3.700M10 9.500v4" stroke="#c7c7c7" stroke-width="1.700"/><path d="M17.500 10.500v8M13.500 14.500h8" stroke="#c7c7c7" stroke-width="1.800"/>`)}</div>
          <div class="cell" style="width:48px">${ic(24, 24, svg`<path d="M19 8H5c-1.660 0-3 1.340-3 3v6h4v4h12v-4h4v-6c0-1.660-1.340-3-3-3zm-3 11H8v-5h8v5zm3-7c-.55 0-1-.45-1-1s.45-1 1-1 1 .45 1 1-.45 1-1 1zm-1-9H6v4h12V3z" fill="#c7c7c7"/>`)}</div>
          <div class="cell" style="width:48px">${ic(18, 18, svg`<path d="M9 1v10M4.500 7 9 11.500 13.500 7M1.800 12v4.200h14.400V12" stroke="#c7c7c7" stroke-width="1.900"/>`)}</div>
          <div class="cell" style="width:48px">${ic(6, 17, svg`<g fill="#c7c7c7"><circle cx="3" cy="2" r="2"/><circle cx="3" cy="8.500" r="2"/><circle cx="3" cy="15" r="2"/></g>`)}</div>
          <div style="width:12px"></div>
          <div class="share">
            ${ic(17, 17, svg`<path d="M12 2C6.480 2 2 6.480 2 12s4.480 10 10 10 10-4.480 10-10S17.520 2 12 2zm-1 17.930c-3.950-.49-7-3.850-7-7.930 0-.62.080-1.210.210-1.790L9 15v1c0 1.100.9 2 2 2v1.930zm6.900-2.540c-.26-.81-1-1.390-1.900-1.390h-1v-3c0-.55-.45-1-1-1H8v-2h2c.55 0 1-.45 1-1V7h2c1.100 0 2-.9 2-2v-.41c2.930 1.190 5 4.060 5 7.410 0 2.080-.8 3.970-2.100 5.390z" fill="#c2e7ff"/>`, '2 1 20 20')}
            ${t('Share', 38)}
            <div class="sdiv"></div>
            <div class="cell" style="width:32px">${ic(8, 5, svg`<path d="M0 .5h8l-4 4z" fill="#c2e7ff"/>`)}</div>
          </div>
        </div>
        <div class="body">${this.drive()}${this.reader()}</div>
      </div>
      ${this.taskbar()}`;
  }
}
